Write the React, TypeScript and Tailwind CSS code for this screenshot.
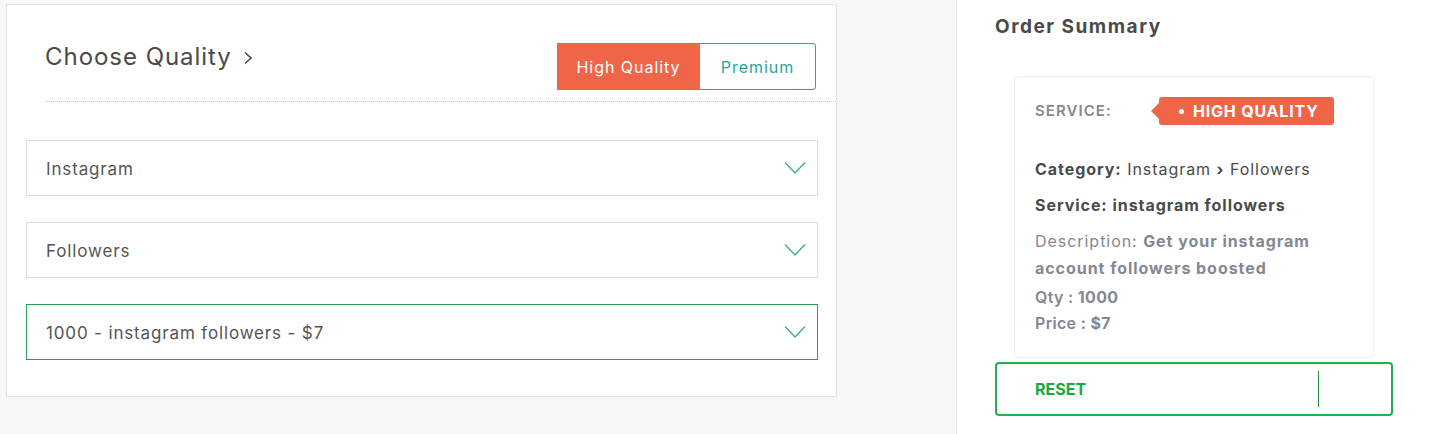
import React from "react";

const Chevron = () => (
  <svg width="22" height="14" viewBox="0 0 22 14" fill="none" className="shrink-0">
    <path d="M1 1.5 L11 12 L21 1.5" stroke="#3cb371" strokeWidth="1.3" />
  </svg>
);

const Select = ({ label, active }: { label: string; active?: boolean }) => (
  <div
    className={`flex h-[56px] items-center justify-between border bg-white pl-[19px] pr-[11px] ${
      active ? "border-[#2e9e57]" : "border-[#dedede]"
    }`}
  >
    <span className="pt-[3px] text-[17px] tracking-[0.05em] text-[#555]">{label}</span>
    <Chevron />
  </div>
);

export default function App() {
  return (
    <div
      className="flex h-[434px] w-[1429px] overflow-hidden bg-[#f7f7f7]"
      style={{ fontFamily: "Inter, 'Open Sans', sans-serif" }}
    >
      <div className="w-[956px] shrink-0 pl-[6px] pt-[4px]">
        <div className="flex h-[393px] w-[831px] flex-col border border-[#e3e3e3] bg-white pl-[19px] pr-[18px]">
          <div className="ml-[19px] mr-[-18px] flex items-start justify-between border-b border-dotted border-[#c8c8c8] pb-[11px] pr-[20px] pt-[38px]">
            <h2 className="mt-[-2px] flex items-center text-[24px] leading-[32px] tracking-[0.04em] text-[#4a4a4a]">
              Choose Quality
              <svg width="10" height="14" viewBox="0 0 10 14" fill="none" className="ml-[11px] mt-[1px]">
                <path d="M2 1.5 L8 7 L2 12.5" stroke="#4a4a4a" strokeWidth="1.6" />
              </svg>
            </h2>
            <div className="flex h-[47px]">
              <button className="flex w-[143px] items-center justify-center bg-[#ef6548] text-[16px] tracking-[0.06em] text-white">
                High Quality
              </button>
              <button className="flex w-[116px] items-center justify-center rounded-r-[4px] border border-l-0 border-[#26a69a] text-[16px] tracking-[0.06em] text-[#26a69a]">
                Premium
              </button>
            </div>
          </div>
          <div className="mt-[38px] flex flex-col gap-[26px]">
            <Select label="Instagram" />
            <Select label="Followers" />
            <Select label="1000 - instagram followers - $7" active />
          </div>
        </div>
      </div>
      <div className="flex flex-1 flex-col border-l border-[#e6e6e6] bg-white pl-[38px] pt-[15px]">
        <h3 className="text-[19px] font-bold leading-[24px] tracking-[0.08em] text-[#4a4a4a]">Order Summary</h3>
        <div className="ml-[19px] mt-[37px] h-[282px] w-[360px] rounded-[4px] border border-[#eeeeee] pl-[20px] pr-[10px] pt-[20px]">
          <div className="flex h-[28px] items-center">
            <span className="w-[124px] text-[15px] font-semibold tracking-[0.07em] text-[#858793]">SERVICE:</span>
            <div className="relative flex h-[28px] items-center rounded-[3px] bg-[#ef6548] pl-[20px] pr-[15px]">
              <span className="absolute left-[-8px] top-[6px] h-0 w-0 border-y-[8px] border-r-[8px] border-y-transparent border-r-[#ef6548]" />
              <span className="mr-[9px] h-[5px] w-[5px] rounded-full bg-white" />
              <span className="text-[16px] font-bold tracking-[0.05em] text-white">HIGH QUALITY</span>
            </div>
          </div>
          <div className="mt-[31px] text-[16px] leading-[26px] tracking-[0.06em] text-[#4a4a4a]">
            <span className="font-bold">Category:</span> Instagram <span className="font-bold">›</span> Followers
          </div>
          <div className="mt-[10px] text-[16px] font-bold leading-[26px] tracking-[0.06em] text-[#4a4a4a]">
            Service: instagram followers
          </div>
          <p className="mt-[10px] text-[16px] leading-[27px] tracking-[0.06em] text-[#858793]">
            Description: <b className="font-bold">Get your instagram account followers boosted</b>
          </p>
          <div className="mt-[2px] text-[16px] font-semibold leading-[26px] tracking-[0.02em] text-[#858793]">
            Qty : <span className="font-bold">1000</span>
          </div>
          <div className="text-[16px] font-semibold leading-[26px] tracking-[0.02em] text-[#858793]">
            Price : <span className="font-bold">$7</span>
          </div>
        </div>
        <div className="mt-[4px] flex h-[54px] w-[398px] items-center rounded-[4px] border-2 border-[#22b24c] pl-[38px]">
          <span className="text-[16px] font-bold text-[#1aa83c]">RESET</span>
          <span className="ml-auto mr-[72px] h-[36px] w-[1px] bg-[#2a8a3e]" />
        </div>
      </div>
    </div>
  );
}
